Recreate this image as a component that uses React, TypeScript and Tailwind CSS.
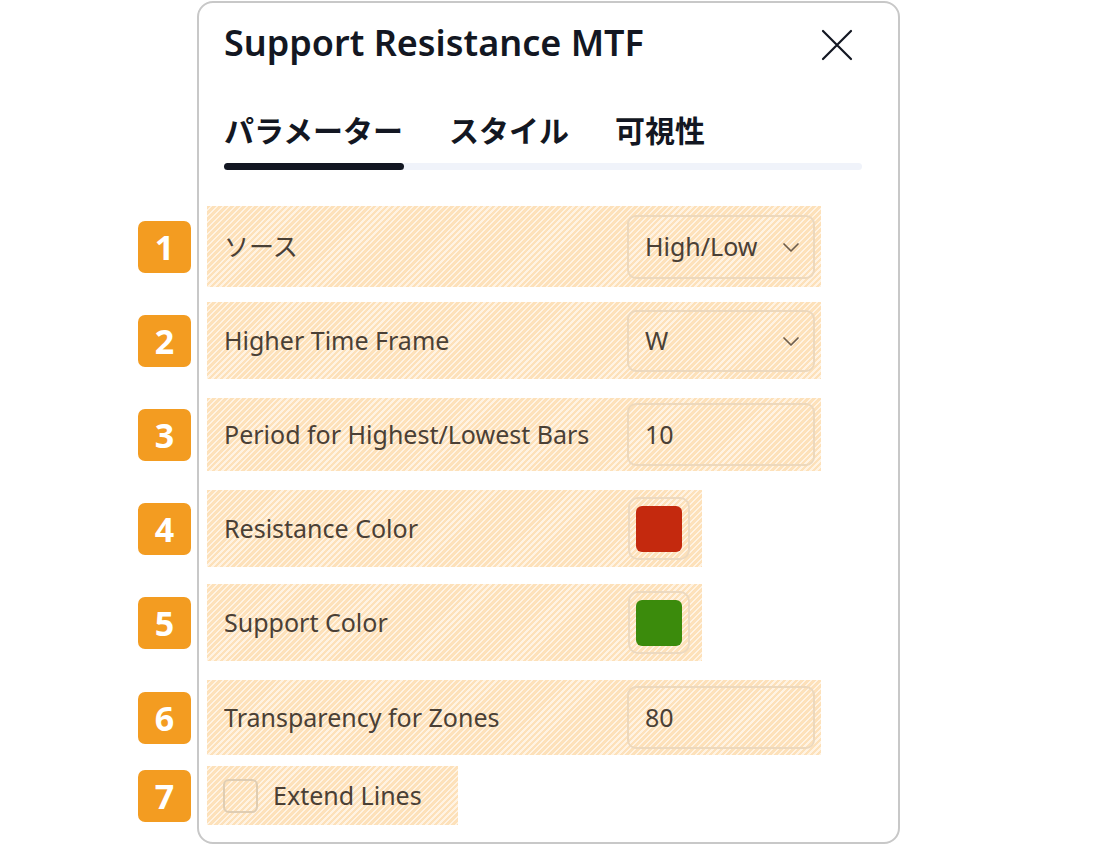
import React from 'react';

const hatch =
  'bg-[repeating-linear-gradient(135deg,#fde1ba_0px,#fde1ba_2.6px,#fff3e3_2.6px,#fff3e3_4.2px)]';

const font = { fontFamily: '"Noto Sans", "Noto Sans CJK JP", sans-serif' };

function Badge({ n }: { n: number }) {
  return (
    <div className="absolute -left-[69px] top-1/2 -translate-y-1/2 w-[53px] h-[52px] rounded-[7px] bg-[#f39c21] flex items-center justify-center text-white text-[34px] font-bold leading-none">
      {n}
    </div>
  );
}

function Chevron() {
  return (
    <svg width="20" height="20" viewBox="0 0 20 20" fill="none" stroke="#6e5d4b" strokeWidth="1.7" strokeLinecap="round" strokeLinejoin="round">
      <path d="M3 7l7 7 7-7" />
    </svg>
  );
}

function Row({
  n,
  h,
  mt,
  w,
  children,
}: {
  n: number;
  h: string;
  mt: string;
  w: string;
  children: React.ReactNode;
}) {
  return (
    <div className={`relative flex items-center justify-between ${w} ${h} ${mt} ${hatch}`}>
      <Badge n={n} />
      {children}
    </div>
  );
}

function Label({ children }: { children: React.ReactNode }) {
  return <span className="pl-[17px] text-[25px] text-[#4a4036]">{children}</span>;
}

function Select({ value, h }: { value: string; h: string }) {
  return (
    <div className={`mr-[6px] w-[188px] ${h} rounded-[9px] border-2 border-[#ecd8bd] flex items-center justify-between pl-[16px] pr-[12px] text-[25px] text-[#4a4036]`}>
      <span>{value}</span>
      <Chevron />
    </div>
  );
}

function NumInput({ value, h }: { value: string; h: string }) {
  return (
    <div className={`mr-[6px] w-[188px] ${h} rounded-[9px] border-2 border-[#ecd8bd] flex items-center pl-[16px] text-[25px] text-[#4a4036]`}>
      {value}
    </div>
  );
}

function Swatch({ color }: { color: string }) {
  return (
    <div className="mr-[12px] w-[62px] h-[63px] rounded-[10px] border-2 border-[#ecd9c0] flex items-center justify-center">
      <div className={`w-[46px] h-[46px] rounded-[6px] ${color}`} />
    </div>
  );
}

export default function App() {
  return (
    <div className="w-[1100px] h-[846px] bg-white pl-[197px] pt-px" style={font}>
      <div className="w-[703px] h-[843px] rounded-[16px] border-2 border-[#c8c8c8] pt-[20px]">
        <div className="flex items-start justify-between pl-[25px] pr-[45px]">
          <h1 className="text-[36px] leading-[40px] font-semibold text-[#131722]">
            Support Resistance MTF
          </h1>
          <svg className="mt-[6px]" width="32" height="32" viewBox="0 0 32 32" fill="none" stroke="#131722" strokeWidth="2.2" strokeLinecap="round">
            <path d="M2 2l28 28M30 2L2 30" />
          </svg>
        </div>

        <div className="pl-[25px] mt-[50px]">
          <div className="flex gap-[46px] text-[30px] leading-[36px] font-bold text-[#131722]">
            <span>パラメーター</span>
            <span>スタイル</span>
            <span>可視性</span>
          </div>
          <div className="mt-[14px] w-[638px] h-[7px] rounded-full bg-[#f0f3fa]">
            <div className="w-[180px] h-[7px] rounded-full bg-[#131722]" />
          </div>
        </div>

        <div className="pl-[8px] mt-[36px]">
          <Row n={1} h="h-[81px]" mt="mt-0" w="w-[614px]">
            <Label>ソース</Label>
            <Select value="High/Low" h="h-[64px]" />
          </Row>
          <Row n={2} h="h-[77px]" mt="mt-[15px]" w="w-[614px]">
            <Label>Higher Time Frame</Label>
            <Select value="W" h="h-[62px]" />
          </Row>
          <Row n={3} h="h-[73px]" mt="mt-[19px]" w="w-[614px]">
            <Label>Period for Highest/Lowest Bars</Label>
            <NumInput value="10" h="h-[63px]" />
          </Row>
          <Row n={4} h="h-[77px]" mt="mt-[19px]" w="w-[495px]">
            <Label>Resistance Color</Label>
            <Swatch color="bg-[#c4290e]" />
          </Row>
          <Row n={5} h="h-[77px]" mt="mt-[17px]" w="w-[495px]">
            <Label>Support Color</Label>
            <Swatch color="bg-[#3b8b0c]" />
          </Row>
          <Row n={6} h="h-[75px]" mt="mt-[19px]" w="w-[614px]">
            <Label>Transparency for Zones</Label>
            <NumInput value="80" h="h-[63px]" />
          </Row>
          <div className={`relative flex items-center w-[251px] h-[59px] mt-[11px] pl-[16px] ${hatch}`}>
            <Badge n={7} />
            <div className="w-[35px] h-[34px] rounded-[6px] border-2 border-[#dfcdb3]" />
            <span className="ml-[15px] text-[25px] text-[#4a4036]">Extend Lines</span>
          </div>
        </div>
      </div>
    </div>
  );
}
